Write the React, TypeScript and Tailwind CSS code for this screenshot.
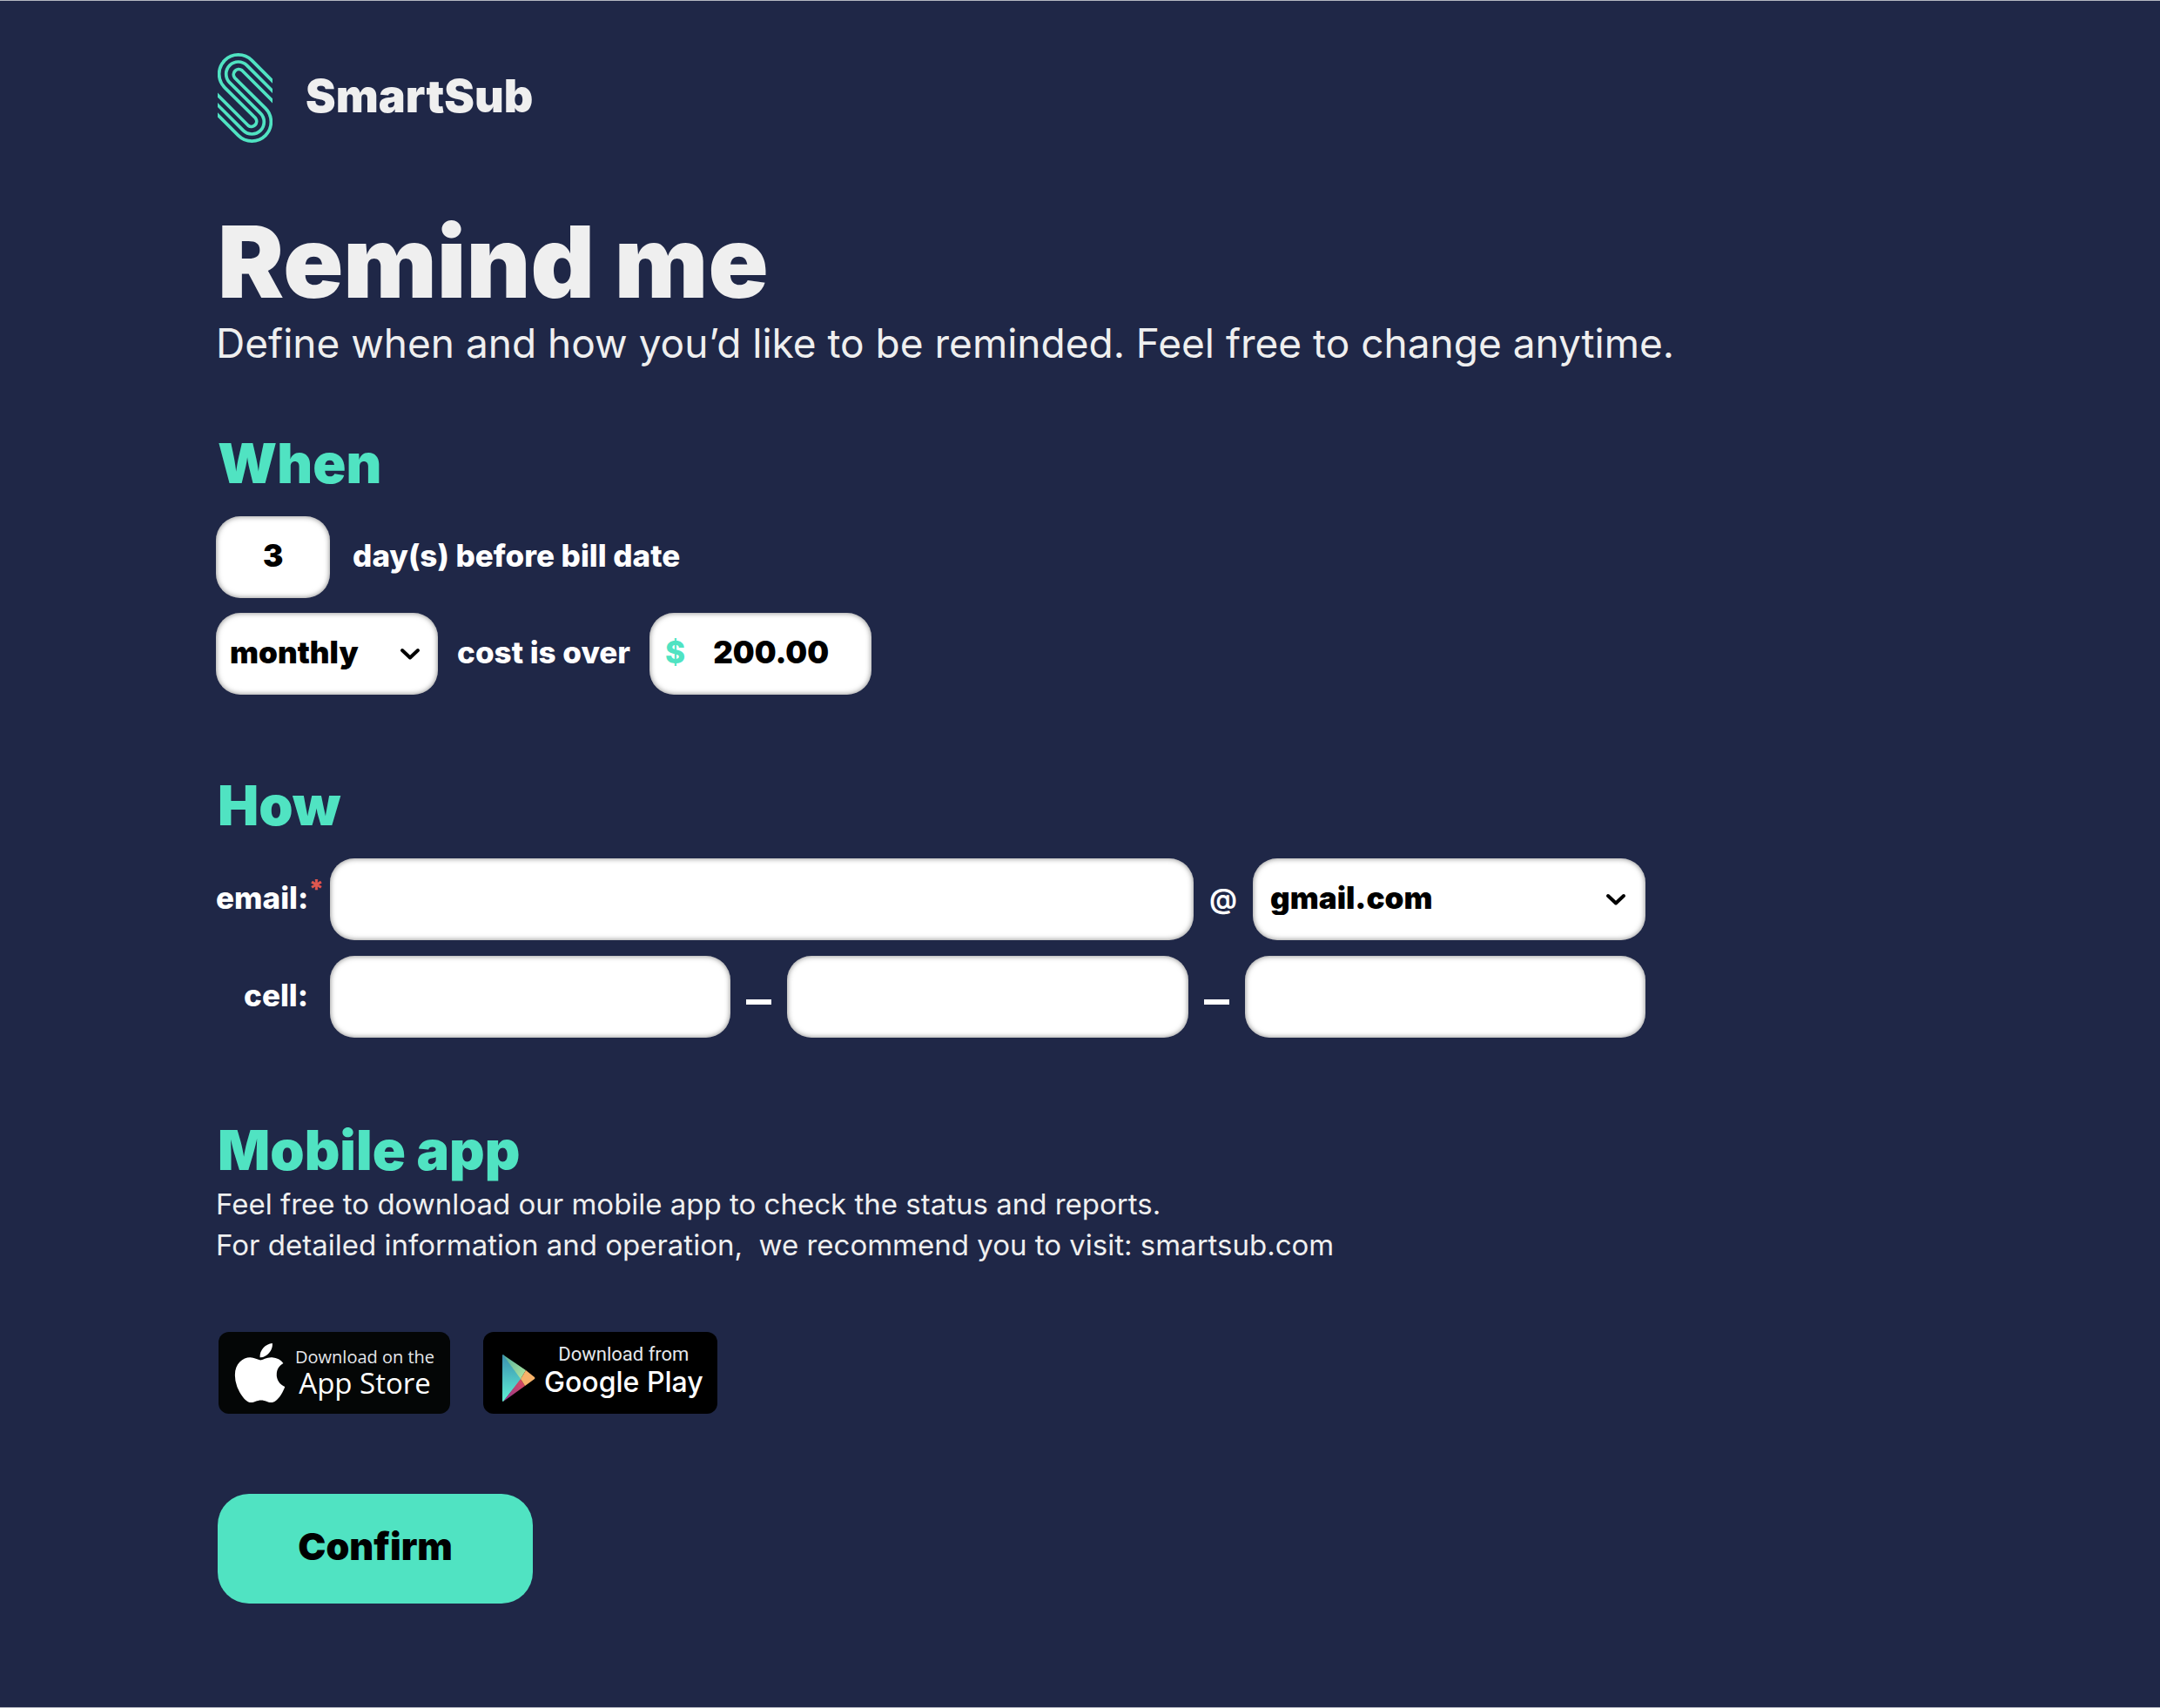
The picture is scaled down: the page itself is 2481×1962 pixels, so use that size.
import React, { useState } from "react";
import { FaApple } from "react-icons/fa";

const field =
  "h-[94px] rounded-[28px] bg-white pb-1 text-black shadow-[inset_0_0_6px_rgba(0,0,0,0.5)] outline-none focus-visible:ring-4 focus-visible:ring-[#50e3c2]";

function Logo() {
  return (
    <svg
      viewBox="0 0 63 103"
      className="h-[103px] w-[63px] shrink-0"
      fill="none"
      stroke="#50e3c2"
      strokeWidth="3.7"
      aria-hidden="true"
    >
      <path d="M70 39.1 L39.3 8.4 A22 22 0 0 0 8.1 39.6 L43.5 74.8 A6 6 0 0 1 35.1 83.2 L-7 41.1" />
      <path d="M70 50.5 L33.6 14.1 A14 14 0 0 0 13.8 33.9 L49.2 69.1 A14 14 0 0 1 29.4 88.9 L-7 52.5" />
      <path d="M70 61.9 L27.9 19.8 A6 6 0 0 0 19.5 28.2 L54.9 63.4 A22 22 0 0 1 23.7 94.6 L-7 63.9" />
    </svg>
  );
}

function Chevron({ className }: { className: string }) {
  return (
    <svg
      viewBox="0 0 24 16"
      className={`pointer-events-none absolute top-1/2 h-4 w-6 -translate-y-1/2 ${className}`}
      fill="none"
      stroke="#000"
      strokeWidth="4"
      strokeLinecap="round"
      strokeLinejoin="round"
      aria-hidden="true"
    >
      <path d="M3 4 L12 12.5 L21 4" />
    </svg>
  );
}

function PlayMark() {
  return (
    <svg viewBox="0 0 38 54" className="h-[54px] w-[38px] shrink-0" aria-hidden="true">
      <defs>
        <linearGradient id="playBlue" x1="0" y1="0" x2="0" y2="1">
          <stop offset="0" stopColor="#3a8fb0" />
          <stop offset="1" stopColor="#5ff0d4" />
        </linearGradient>
        <linearGradient id="playRed" x1="1" y1="0" x2="0" y2="1">
          <stop offset="0" stopColor="#e0475a" />
          <stop offset="1" stopColor="#8a3a94" />
        </linearGradient>
        <linearGradient id="playGreen" x1="0" y1="0" x2="1" y2="1">
          <stop offset="0" stopColor="#4fae9c" />
          <stop offset="1" stopColor="#b5e8a0" />
        </linearGradient>
      </defs>
      <path d="M0 1 Q0 0 1 0 L22 28 L1 54 Q0 54 0 53 Z" fill="url(#playBlue)" />
      <path d="M0.5 0 L27 18 L21 28 Z" fill="url(#playGreen)" />
      <path d="M1 54 L21 28 L26 36 Z" fill="url(#playRed)" />
      <path d="M27 18 L37 26 Q38 27 37 28 L26 36 L21 28 Z" fill="#f7b26a" />
    </svg>
  );
}

function SectionTitle({ children }: { children: React.ReactNode }) {
  return (
    <h2 className="pl-0.5 text-[63px] leading-[74px] font-black text-[#50e3c2]">{children}</h2>
  );
}

function Dash() {
  return <span className="mt-3 h-[6px] w-[29px] shrink-0 bg-white" aria-hidden="true" />;
}

export default function App() {
  const [days, setDays] = useState("3");
  const [amount, setAmount] = useState("200.00");

  return (
    <div className="min-h-screen border-y border-[#b5b8c2] bg-[#1f2747] px-[10%] pt-[60px] pb-[112px] font-['Inter',sans-serif] text-white">
      <header className="flex items-center gap-[38px] pl-0.5">
        <Logo />
        <span className="pb-1 text-[52px] leading-[60px] font-black text-[#efefef]">SmartSub</span>
      </header>

      <form onSubmit={(e) => e.preventDefault()}>
        <h1 className="mt-[72px] pl-0.5 text-[114px] leading-[130px] font-black text-[#efefef]">
          Remind me
        </h1>
        <p className="text-[46px] leading-[56px] text-[#efefef]">
          Define when and how you’d like to be reminded. Feel free to change anytime.
        </p>

        <section className="mt-[73px]">
          <SectionTitle>When</SectionTitle>
          <div className="mt-6 flex items-center gap-[26px] text-[35px] leading-10 font-extrabold">
            <input
              id="days"
              value={days}
              onChange={(e) => setDays(e.target.value)}
              className={`${field} w-[131px] text-center font-black`}
            />
            <label htmlFor="days" className="pb-1">
              day(s) before bill date
            </label>
          </div>
          <div className="mt-[17px] flex items-center gap-[22px] text-[35px] leading-10 font-extrabold">
            <div className="relative w-[255px]">
              <select
                aria-label="Billing period"
                defaultValue="monthly"
                className={`${field} w-full appearance-none pl-4 font-black`}
              >
                <option>monthly</option>
                <option>yearly</option>
              </select>
              <Chevron className="right-5" />
            </div>
            <label htmlFor="amount" className="pb-1">
              cost is over
            </label>
            <div className={`${field} flex w-[255px] items-center pl-[18px]`}>
              <span className="text-[#50e3c2]">$</span>
              <input
                id="amount"
                value={amount}
                onChange={(e) => setAmount(e.target.value)}
                className="ml-8 w-full min-w-0 bg-transparent font-black outline-none"
              />
            </div>
          </div>
        </section>

        <section className="mt-[90px] max-w-[1642px]">
          <SectionTitle>How</SectionTitle>
          <div className="mt-6 flex items-center text-[35px] leading-10 font-extrabold">
            <label
              htmlFor="email"
              className="flex w-[131px] shrink-0 items-start justify-end pr-[7px] pb-1"
            >
              <span>email:</span>
              <span className="w-[18px] text-center text-[30px] leading-5 text-[#e0584f]">*</span>
            </label>
            <input id="email" required className={`${field} min-w-0 flex-1 px-6`} />
            <span className="w-[68px] shrink-0 text-center text-[32px] font-semibold">@</span>
            <div className="relative w-[451px] shrink-0">
              <select
                aria-label="Email provider"
                defaultValue="gmail.com"
                className={`${field} w-full appearance-none pl-5 font-black`}
              >
                <option>gmail.com</option>
                <option>outlook.com</option>
                <option>yahoo.com</option>
              </select>
              <Chevron className="right-[22px]" />
            </div>
          </div>
          <div className="mt-[18px] flex items-center text-[35px] leading-10 font-extrabold">
            <label htmlFor="cell" className="w-[131px] shrink-0 pr-[25px] pb-1 text-right">
              cell:
            </label>
            <div className="flex min-w-0 flex-1 items-center gap-[18px]">
              <input id="cell" type="tel" className={`${field} w-0 flex-1 px-6`} />
              <Dash />
              <input aria-label="Cell, second part" type="tel" className={`${field} w-0 flex-1 px-6`} />
              <Dash />
              <input aria-label="Cell, third part" type="tel" className={`${field} w-0 flex-1 px-6`} />
            </div>
          </div>
        </section>

        <section className="mt-[92px]">
          <SectionTitle>Mobile app</SectionTitle>
          <p className="mt-0.5 text-[33px] leading-[47px] whitespace-pre-wrap text-[#efefef]">
            {
              "Feel free to download our mobile app to check the status and reports.\nFor detailed information and operation,  we recommend you to visit: smartsub.com"
            }
          </p>
          <div className="mt-[76px] flex items-start gap-[38px] pl-[3px]">
            <a
              href="#app-store"
              className="flex h-[94px] w-[266px] items-center justify-between rounded-xl bg-[#040606] pr-[18px] pl-[18px] font-['Open_Sans',sans-serif]"
            >
              <FaApple className="h-[78px] w-[59px] shrink-0" aria-hidden="true" />
              <span className="flex flex-col items-center whitespace-nowrap">
                <span className="text-[20px] leading-6 text-gray-200">Download on the</span>
                <span className="text-[33px] leading-9">App Store</span>
              </span>
            </a>
            <a
              href="#google-play"
              className="flex h-[94px] w-[269px] items-center gap-[10px] rounded-xl bg-black pl-[22px]"
            >
              <span className="pt-3">
                <PlayMark />
              </span>
              <span className="flex flex-col items-center pb-1.5 whitespace-nowrap">
                <span className="font-['Roboto',sans-serif] text-[22px] leading-7 text-gray-200">
                  Download from
                </span>
                <span className="text-[32px] leading-9 font-medium">Google Play</span>
              </span>
            </a>
          </div>
        </section>

        <button
          type="submit"
          className="mt-[92px] ml-0.5 h-[126px] w-[362px] rounded-[36px] bg-[#50e3c2] pb-1.5 text-[43px] font-black text-black"
        >
          Confirm
        </button>
      </form>
    </div>
  );
}
